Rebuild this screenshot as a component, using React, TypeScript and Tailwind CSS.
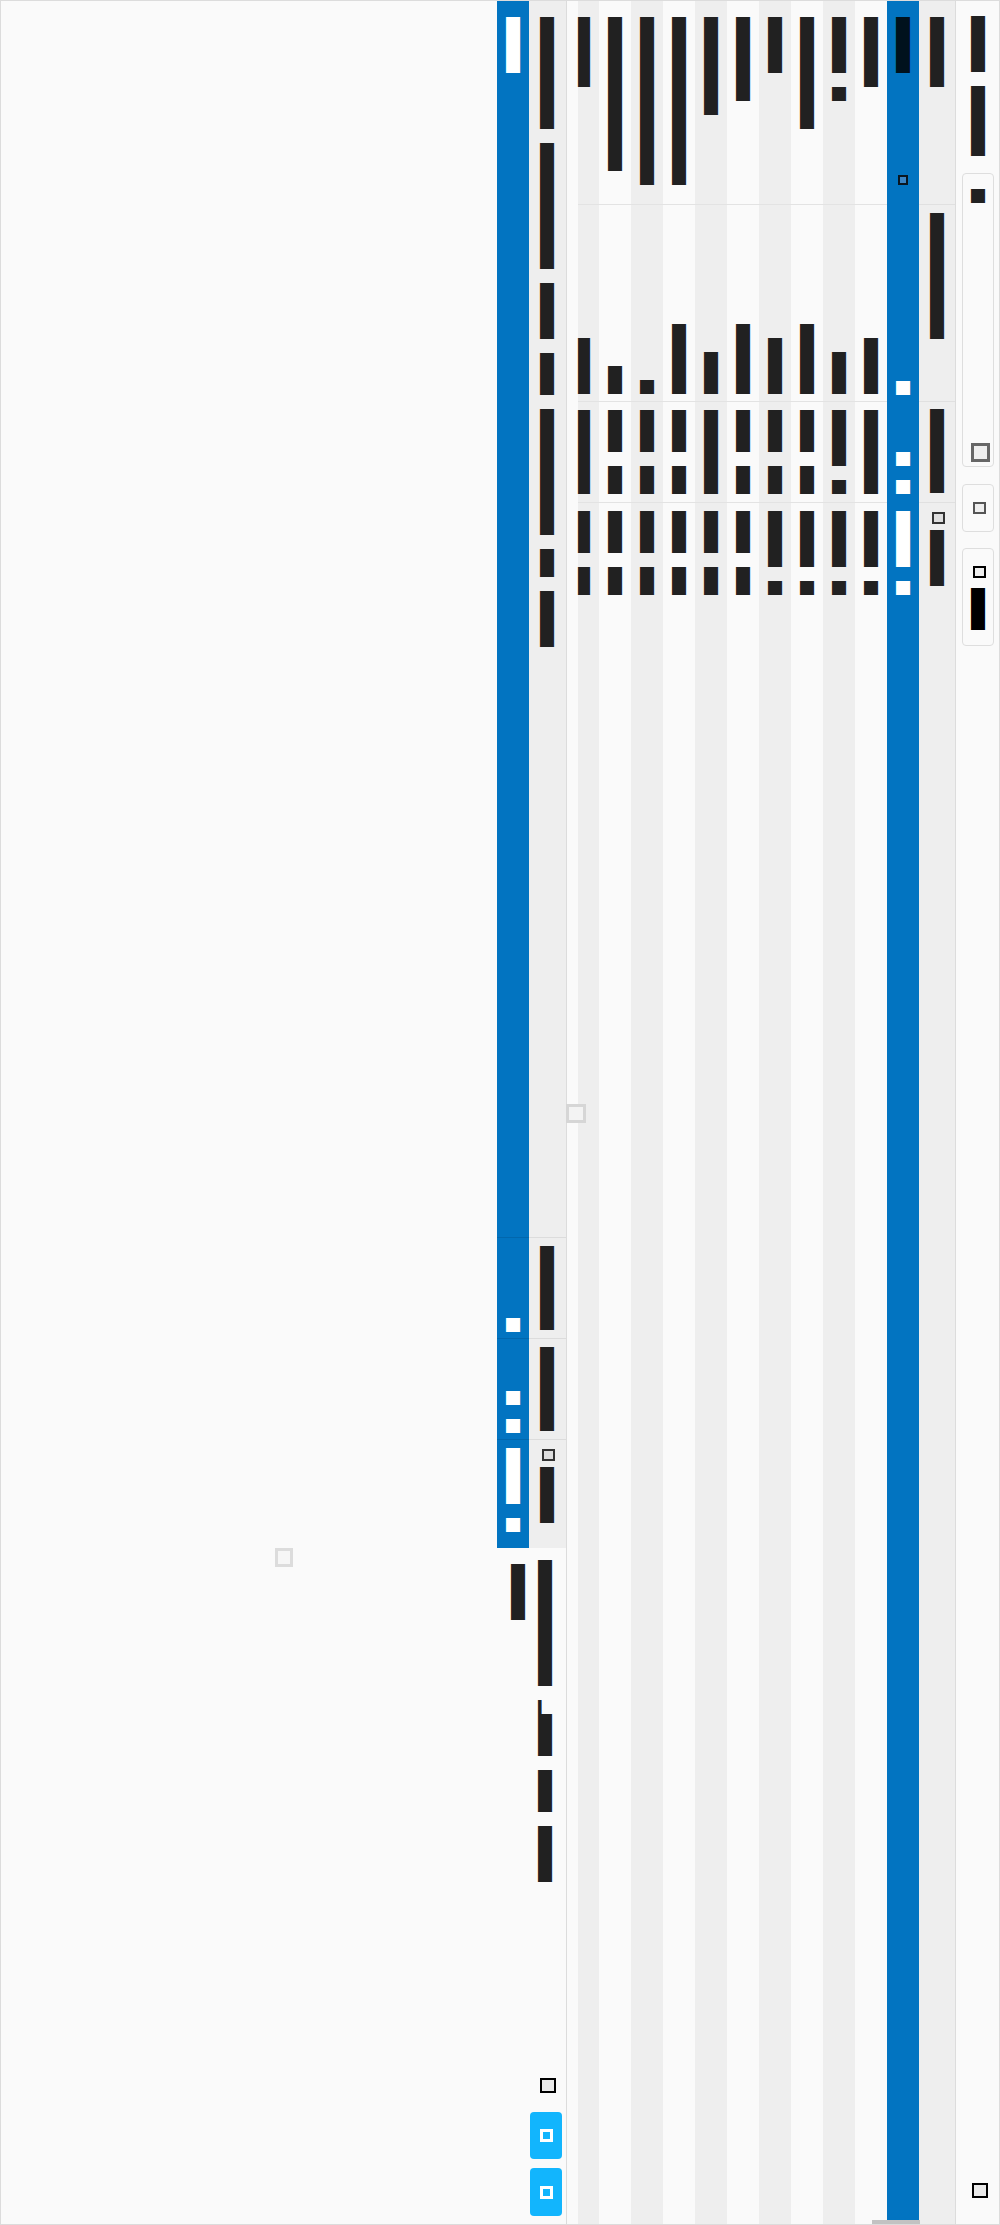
import React from "react";

const S = "\u3000";
const x = (n: number) => "█".repeat(n);
const j = (...a: number[]) => a.map(x).join(S);

function V({ s, c = "text-[#212121]", m = "" }: { s: string; c?: string; m?: string }) {
  return (
    <span
      className={`block w-[14px] shrink-0 whitespace-pre [writing-mode:vertical-rl] [text-orientation:upright] font-['Noto_Sans_CJK_JP',sans-serif] text-[14px] leading-[14px] ${c} ${m}`}
    >
      {s}
    </span>
  );
}

type Col = { w: string; bg: string; m: string; head: string; r1: string; r2: string; r3: string };

const cols: Col[] = [
  { w: "w-[21px]", bg: "bg-[#eeeeee]", m: "scale-x-[0.857] origin-left", head: j(5), r1: j(4), r2: j(6), r3: j(3, 2) },
  { w: "w-[32px]", bg: "bg-[#fafafa]", m: "ml-[9px]", head: j(11), r1: j(2), r2: j(3, 2), r3: j(3, 2) },
  { w: "w-[32px]", bg: "bg-[#eeeeee]", m: "ml-[9px]", head: j(12), r1: j(1), r2: j(3, 2), r3: j(3, 2) },
  { w: "w-[32px]", bg: "bg-[#fafafa]", m: "ml-[9px]", head: j(12), r1: j(5), r2: j(3, 2), r3: j(3, 2) },
  { w: "w-[32px]", bg: "bg-[#eeeeee]", m: "ml-[9px]", head: j(7), r1: j(3), r2: j(6), r3: j(3, 2) },
  { w: "w-[32px]", bg: "bg-[#fafafa]", m: "ml-[9px]", head: j(6), r1: j(5), r2: j(3, 2), r3: j(3, 2) },
  { w: "w-[32px]", bg: "bg-[#eeeeee]", m: "ml-[9px]", head: j(4), r1: j(4), r2: j(3, 2), r3: j(4, 1) },
  { w: "w-[32px]", bg: "bg-[#fafafa]", m: "ml-[9px]", head: j(8), r1: j(5), r2: j(3, 2), r3: j(4, 1) },
  { w: "w-[32px]", bg: "bg-[#eeeeee]", m: "ml-[9px]", head: j(4, 1), r1: j(3), r2: j(4, 1), r3: j(4, 1) },
  { w: "w-[32px]", bg: "bg-[#fafafa]", m: "ml-[9px]", head: j(5), r1: j(4), r2: j(6), r3: j(4, 1) },
];

function TCol({ c }: { c: Col }) {
  return (
    <div className={`flex flex-col ${c.w} ${c.bg}`}>
      <div className="h-[204px] border-b border-[#e3e3e3] pt-[16px]">
        <V s={c.head} m={c.m} />
      </div>
      <div className="h-[197px] border-b border-[#e3e3e3] flex flex-col justify-end pb-[7px]">
        <V s={c.r1} m={c.m} />
      </div>
      <div className="h-[101px] border-b border-[#e3e3e3] pt-[8px]">
        <V s={c.r2} m={c.m} />
      </div>
      <div className="pt-[8px]">
        <V s={c.r3} m={c.m} />
      </div>
    </div>
  );
}

export default function App() {
  return (
    <div className="relative w-[1000px] h-[2225px] flex border border-[#dcdcdc] bg-[#fafafa] overflow-hidden font-['Liberation_Sans',sans-serif]">
      {/* left panel */}
      <div className="w-[566px] shrink-0 flex border-r border-[#dcdcdc]">
        <div className="flex-1" />
        <div className="w-[69px] flex flex-col">
          <div className="flex h-[1237px]">
            <div className="w-[32px] bg-[#0274c1] border-b border-[#0167ad] pt-[16px]">
              <V s={j(4)} c="text-white" m="ml-[9px]" />
            </div>
            <div className="flex-1 bg-[#eeeeee] border-b border-[#dcdcdc] pt-[16px]">
              <V s={j(8, 9, 4, 3, 9, 2, 4)} m="ml-[11px]" />
            </div>
          </div>
          <div className="flex h-[101px]">
            <div className="w-[32px] bg-[#0274c1] border-b border-[#0167ad] flex flex-col justify-end pb-[6px]">
              <V s={j(1)} c="text-white" m="ml-[9px]" />
            </div>
            <div className="flex-1 bg-[#eeeeee] border-b border-[#dcdcdc] pt-[8px]">
              <V s={j(6)} m="ml-[11px]" />
            </div>
          </div>
          <div className="flex h-[101px]">
            <div className="w-[32px] bg-[#0274c1] border-b border-[#0167ad] flex flex-col justify-end pb-[6px]">
              <V s={j(1, 1)} c="text-white" m="ml-[9px]" />
            </div>
            <div className="flex-1 bg-[#eeeeee] border-b border-[#dcdcdc] pt-[8px]">
              <V s={j(6)} m="ml-[11px]" />
            </div>
          </div>
          <div className="flex h-[108px]">
            <div className="w-[32px] bg-[#0274c1] pt-[8px]">
              <V s={j(4, 1)} c="text-white" m="ml-[9px]" />
            </div>
            <div className="flex-1 bg-[#eeeeee] pt-[9px]">
              <span className="block ml-[13px] w-[13px] h-[12px] border-2 border-[#333333] bg-[#dedede]" />
              <V s={j(4)} m="ml-[11px] mt-[6px]" />
            </div>
          </div>
          <div className="flex pl-[14px] gap-[13px]">
            <V s={j(4)} m="mt-[16px]" />
            <V s={x(9) + S + "▎" + x(3) + S + j(3) + S + j(4)} m="mt-[12px]" />
          </div>
          <div className="flex-1" />
          <div className="flex flex-col items-end pr-[4px] pb-[8px]">
            <span className="block mr-[6px] w-[16px] h-[15px] border-2 border-black bg-[#eaeaea]" />
            <button className="mt-[19px] w-[32px] h-[47px] rounded-[4px] bg-[#12b5fd] flex items-center justify-center">
              <span className="block w-[13px] h-[13px] border-[3px] border-white" />
            </button>
            <button className="mt-[9px] w-[32px] h-[48px] rounded-[4px] bg-[#12b5fd] flex items-center justify-center">
              <span className="block w-[13px] h-[13px] border-[3px] border-white" />
            </button>
          </div>
        </div>
      </div>

      {/* table */}
      <div className="w-[389px] shrink-0 flex border-r border-[#dcdcdc] pl-[11px]">
        {cols.map((c, i) => (
          <TCol key={i} c={c} />
        ))}
        <div className="w-[32px] bg-[#0274c1] flex flex-col">
          <div className="h-[204px] pt-[16px] pb-[20px] flex flex-col items-center justify-between">
            <V s={j(4)} c="text-[#00121d]" />
            <span className="block w-[10px] h-[10px] border-2 border-[#0a1620] bg-[#3a84c4]" />
          </div>
          <div className="h-[197px] flex flex-col justify-end pb-[7px]">
            <V s={j(1)} c="text-white" m="ml-[9px]" />
          </div>
          <div className="h-[101px] pt-[8px]">
            <V s={S + S + S + x(1) + S + x(1)} c="text-white" m="ml-[9px]" />
          </div>
          <div className="pt-[8px]">
            <V s={j(4, 1)} c="text-white" m="ml-[9px]" />
          </div>
        </div>
        <div className="flex-1 bg-[#eeeeee] flex flex-col">
          <div className="h-[204px] border-b border-[#e0e0e0] pt-[16px]">
            <V s={j(5)} m="ml-[11px]" />
          </div>
          <div className="h-[197px] border-b border-[#e0e0e0] pt-[8px]">
            <V s={j(9)} m="ml-[11px]" />
          </div>
          <div className="h-[101px] border-b border-[#e0e0e0] pt-[7px]">
            <V s={j(6)} m="ml-[11px]" />
          </div>
          <div className="pt-[9px]">
            <span className="block ml-[13px] w-[13px] h-[12px] border-2 border-[#333333] bg-[#dedede]" />
            <V s={j(4)} m="ml-[11px] mt-[6px]" />
          </div>
        </div>
      </div>

      {/* right panel */}
      <div className="flex-1 flex flex-col">
        <V s={j(4, 5)} m="ml-[15px] mt-[15px]" />
        <div className="ml-[6px] mt-[17px] w-[32px] h-[294px] rounded-[4px] border border-[#dedede] flex flex-col justify-between pt-[15px] pb-[4px]">
          <V s={j(1)} m="ml-[8px]" />
          <span className="block ml-[8px] w-[19px] h-[19px] border-[3px] border-[#666666] bg-[#eeeeee]" />
        </div>
        <div className="ml-[6px] mt-[17px] w-[32px] h-[48px] rounded-[4px] border border-[#dedede] flex items-center">
          <span className="block ml-[10px] w-[13px] h-[12px] border-2 border-[#555555] bg-[#eeeeee]" />
        </div>
        <div className="ml-[6px] mt-[16px] w-[32px] h-[98px] rounded-[4px] border border-[#dedede] pt-[17px]">
          <span className="block ml-[10px] w-[13px] h-[12px] border-2 border-black bg-[#eeeeee]" />
          <V s={j(3)} c="text-black" m="ml-[8px] mt-[10px]" />
        </div>
        <div className="flex-1" />
        <span className="block ml-[16px] mb-[26px] w-[16px] h-[15px] border-2 border-black bg-[#eaeaea]" />
      </div>

      {/* overlays */}
      <span className="absolute left-[274px] top-[1547px] w-[18px] h-[19px] border-[3px] border-[#dcdcdc] bg-[#f6f6f6]" />
      <span className="absolute left-[565px] top-[1103px] w-[20px] h-[19px] border-[3px] border-[#d6d6d6] bg-[#f3f3f3] z-10" />
      <span className="absolute left-[871px] top-[2219px] w-[48px] h-[4px] bg-[#c2c2c2] z-10" />
    </div>
  );
}
